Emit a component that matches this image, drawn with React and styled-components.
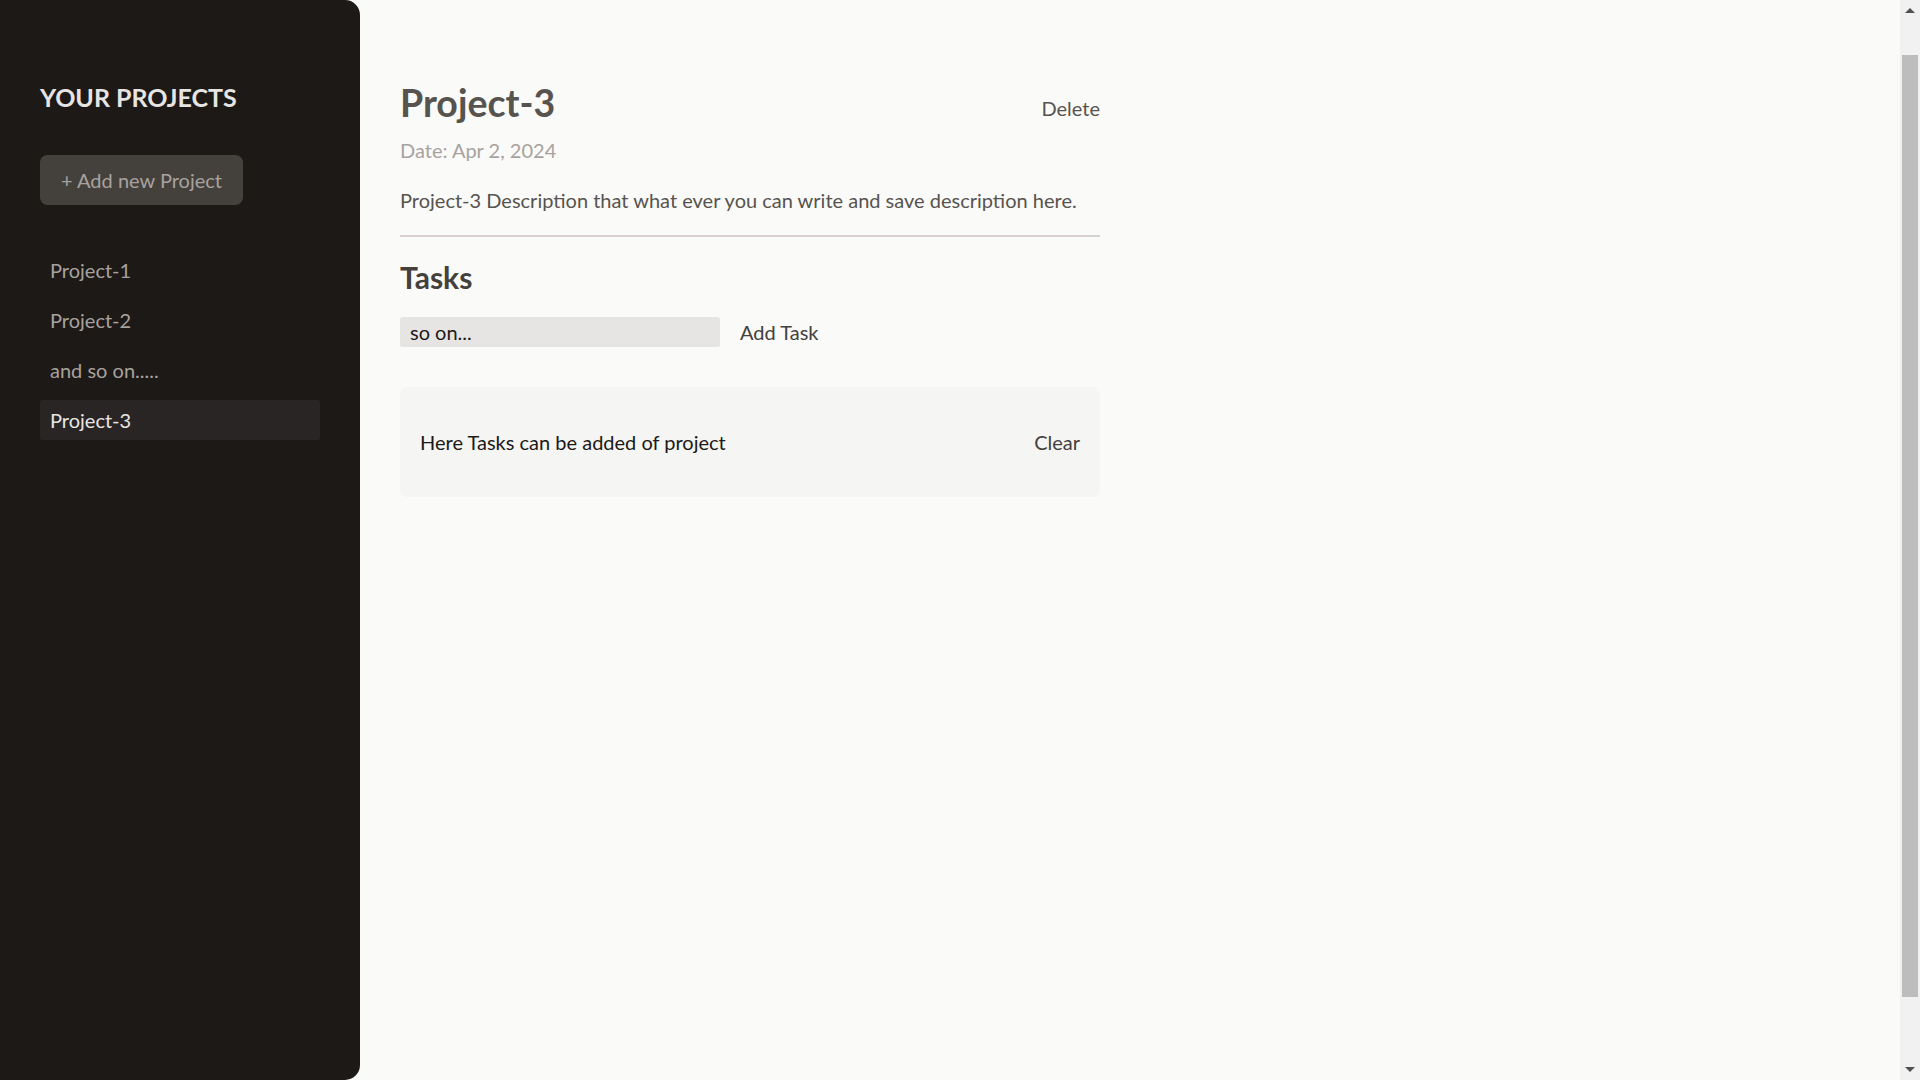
import React from 'react';
import styled, { createGlobalStyle } from 'styled-components';

const GlobalStyle = createGlobalStyle`
	html, body {
		overflow: hidden;
	}
	body {
		margin: 0;
		background: #fafaf9;
		color: #1c1917;
		font-family: Lato, "Open Sans", sans-serif;
		font-size: 20px;
		line-height: 30px;
	}
	* {
		box-sizing: border-box;
	}
`;

const Page = styled.main`
	height: 100vh;
	display: flex;
	gap: 40px;
`;

const Sidebar = styled.aside`
	width: 360px;
	flex-shrink: 0;
	padding: 80px 40px;
	background: #1c1917;
	color: #fafaf9;
	border-radius: 0 15px 15px 0;
`;

const SideTitle = styled.h2`
	margin: 0 0 40px;
	font-size: 25px;
	line-height: 35px;
	font-weight: 700;
	text-transform: uppercase;
	color: #e7e5e4;
`;

const AddButton = styled.button`
	padding: 10px 21px;
	border: none;
	border-radius: 7.5px;
	background: #44403c;
	color: #a8a29e;
	font: inherit;
	line-height: 30px;
	cursor: pointer;
`;

const ProjectList = styled.ul`
	margin: 40px 0 0;
	padding: 0;
	list-style: none;
`;

const ProjectButton = styled.button`
	display: inline-block;
	width: 100%;
	margin: 5px 0;
	padding: 5px 10px;
	border: none;
	border-radius: 2.5px;
	text-align: left;
	font: inherit;
	line-height: 30px;
	cursor: pointer;
	background: ${(p) => (p.$active ? '#292524' : 'transparent')};
	color: ${(p) => (p.$active ? '#e7e5e4' : '#a8a29e')};
`;

const Content = styled.div`
	width: 700px;
	flex-shrink: 0;
	margin-top: 80px;
`;

const Header = styled.header`
	padding-bottom: 20px;
	margin-bottom: 20px;
	border-bottom: 2.5px solid #d6d3d1;
`;

const TitleRow = styled.div`
	display: flex;
	align-items: center;
	justify-content: space-between;
`;

const Title = styled.h1`
	margin: 0 0 10px;
	font-size: 37.5px;
	line-height: 45px;
	font-weight: 700;
	color: #57534e;
`;

const TextButton = styled.button`
	padding: 0;
	border: none;
	background: none;
	font: inherit;
	line-height: 30px;
	color: ${(p) => p.$color || '#44403c'};
	cursor: pointer;
`;

const DateLine = styled.p`
	margin: 0 0 20px;
	color: #a8a29e;
`;

const Description = styled.p`
	margin: 0;
	color: #57534e;
	white-space: pre-wrap;
`;

const SectionTitle = styled.h2`
	margin: 0 0 20px;
	font-size: 30px;
	line-height: 40px;
	font-weight: 700;
	color: #44403c;
`;

const NewTaskRow = styled.div`
	display: flex;
	align-items: center;
	gap: 20px;
`;

const TaskInput = styled.input`
	width: 320px;
	height: 30px;
	padding: 0 10px;
	border: none;
	border-radius: 2.5px;
	background: #e7e5e4;
	color: #1c1917;
	font: inherit;
	outline: none;
`;

const TaskList = styled.ul`
	margin: 40px 0 0;
	padding: 20px;
	list-style: none;
	border-radius: 7.5px;
	background: #f5f5f4;
`;

const TaskItem = styled.li`
	display: flex;
	justify-content: space-between;
	margin: 20px 0;
`;

/* the browser's vertical scrollbar, as it shows in the picture */
const ScrollRail = styled.div`
	width: 20px;
	margin-left: auto;
	flex-shrink: 0;
	display: flex;
	flex-direction: column;
	background: #f1f1f1;
`;

const ScrollArrow = styled.div`
	height: 21px;
	display: flex;
	align-items: center;
	justify-content: center;

	&::before {
		content: '';
		width: 0;
		height: 0;
		border-left: 5px solid transparent;
		border-right: 5px solid transparent;
		${(p) => (p.$down ? 'border-top: 5px solid #505050;' : 'border-bottom: 5px solid #505050;')}
	}
`;

const ScrollTrack = styled.div`
	flex: 1;
	display: flex;
	padding: 34px 2px 62px;
`;

const ScrollThumb = styled.div`
	flex: 1;
	background: #bdbdbd;
`;

const projects = [
	{ id: 1, title: 'Project-1' },
	{ id: 2, title: 'Project-2' },
	{ id: 3, title: 'and so on.....' },
	{ id: 4, title: 'Project-3' },
];

export default function App() {
	return (
		<>
			<GlobalStyle />
			<Page>
				<Sidebar>
					<SideTitle>Your Projects</SideTitle>
					<AddButton>+ Add new Project</AddButton>
					<ProjectList>
						{projects.map((project) => (
							<li key={project.id}>
								<ProjectButton $active={project.id === 4}>{project.title}</ProjectButton>
							</li>
						))}
					</ProjectList>
				</Sidebar>
				<Content>
					<Header>
						<TitleRow>
							<Title>Project-3</Title>
							<TextButton $color="#57534e">Delete</TextButton>
						</TitleRow>
						<DateLine>Date: Apr 2, 2024</DateLine>
						<Description>
							Project-3 Description that what ever you can write and save description here.
						</Description>
					</Header>
					<section>
						<SectionTitle>Tasks</SectionTitle>
						<NewTaskRow>
							<TaskInput defaultValue="so on..." />
							<TextButton>Add Task</TextButton>
						</NewTaskRow>
						<TaskList>
							<TaskItem>
								<span>Here Tasks can be added of project</span>
								<TextButton>Clear</TextButton>
							</TaskItem>
						</TaskList>
					</section>
				</Content>
				<ScrollRail aria-hidden="true">
					<ScrollArrow />
					<ScrollTrack>
						<ScrollThumb />
					</ScrollTrack>
					<ScrollArrow $down />
				</ScrollRail>
			</Page>
		</>
	);
}
